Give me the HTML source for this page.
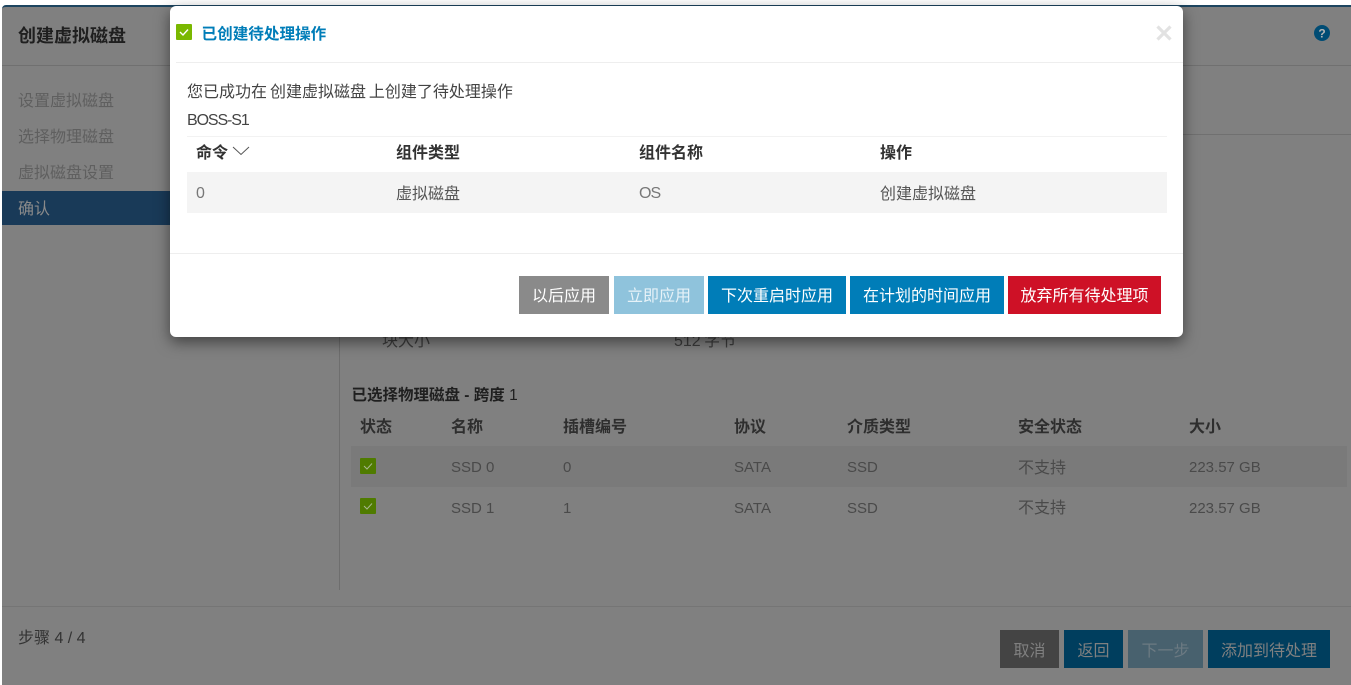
<!DOCTYPE html>
<html lang="zh"><head><meta charset="utf-8"><title>创建虚拟磁盘</title>
<style>
*{box-sizing:border-box}
html,body{margin:0;padding:0}
body{width:1351px;height:685px;position:relative;overflow:hidden;background:#fff;font-family:"Liberation Sans","Noto Sans CJK SC",sans-serif;font-size:16px;color:#4a4a4a;word-spacing:-1px}
.t{position:absolute;white-space:nowrap;line-height:20px}
.l{font-size:15px;color:#4a4a4a;word-spacing:0}
.b{font-weight:700}
.bg{position:absolute;left:2px;top:5px;width:1349px;height:680px;background:#808080;border-top:2px solid #1d4560;border-top-left-radius:4px}
.line{position:absolute;height:1px}
.btn{position:absolute;display:flex;align-items:center;justify-content:center;white-space:nowrap;font-size:16px}
.modal .btn{padding-bottom:2px}
.g{color:#2e2e2e}
.ck{position:absolute;width:16px;height:16px;background:#4f7b00;border-radius:1px}
.ck svg{display:block}
.modal{position:absolute;left:170px;top:6px;width:1013px;height:331px;background:#fff;border-radius:6px;box-shadow:0 5px 15px rgba(0,0,0,.5)}
.m{position:absolute;white-space:nowrap;line-height:20px}
</style></head><body>
<div class="bg"></div>
<div class="t b" style="left:18px;top:26px;font-size:18px;color:#1f1f1f">创建虚拟磁盘</div>
<div class="line" style="left:2px;top:65px;width:1349px;background:#707070"></div>
<div class="t" style="left:18px;top:92px;color:#5f5f5f">设置虚拟磁盘</div>
<div class="t" style="left:18px;top:128px;color:#5f5f5f">选择物理磁盘</div>
<div class="t" style="left:18px;top:164px;color:#5f5f5f">虚拟磁盘设置</div>
<div style="position:absolute;left:2px;top:191px;width:170px;height:34px;background:#193a58"></div>
<div class="t" style="left:18px;top:200px;color:#8a8a8a">确认</div>
<div style="position:absolute;left:339px;top:66px;width:1px;height:524px;background:#6e6e6e"></div>
<div class="line" style="left:1183px;top:134px;width:168px;background:#707070"></div>
<svg style="position:absolute;left:1314px;top:25px" width="16" height="16" viewBox="0 0 16 16"><circle cx="8" cy="8" r="8" fill="#004c74"/><text x="8" y="12.5" font-size="12" font-weight="700" text-anchor="middle" fill="#b5b5b5" font-family="Liberation Sans">?</text></svg>

<div class="t" style="left:382px;top:332px;color:#3c3c3c">块大小</div>
<div class="t" style="left:674px;top:332px;color:#3c3c3c">512 字节</div>
<div class="t b" style="left:351.5px;top:386px;font-size:15.5px;color:#1f1f1f;word-spacing:0">已选择物理磁盘 - 跨度 <span style="font-weight:400">1</span></div>

<div class="t b g" style="left:360px;top:418px">状态</div>
<div class="t b g" style="left:451px;top:418px">名称</div>
<div class="t b g" style="left:563px;top:418px">插槽编号</div>
<div class="t b g" style="left:734px;top:418px">协议</div>
<div class="t b g" style="left:847px;top:418px">介质类型</div>
<div class="t b g" style="left:1018px;top:418px">安全状态</div>
<div class="t b g" style="left:1189px;top:418px">大小</div>
<div style="position:absolute;left:351px;top:446px;width:996px;height:41px;background:#7a7a7a"></div>

<div class="ck" style="left:360px;top:458px"><svg width="16" height="16" viewBox="0 0 16 16"><path d="M4 8l3 3 5-5.5" fill="none" stroke="#a8b890" stroke-width="1"/></svg></div>
<div class="t l" style="left:451px;top:458px">SSD 0</div><div class="t l" style="left:563px;top:458px">0</div><div class="t l" style="left:734px;top:458px">SATA</div><div class="t l" style="left:847px;top:458px">SSD</div><div class="t" style="left:1018px;top:459px">不支持</div><div class="t l" style="left:1189px;top:458px">223.57 GB</div>

<div class="ck" style="left:360px;top:498px"><svg width="16" height="16" viewBox="0 0 16 16"><path d="M4 8l3 3 5-5.5" fill="none" stroke="#a8b890" stroke-width="1"/></svg></div>
<div class="t l" style="left:451px;top:499px">SSD 1</div><div class="t l" style="left:563px;top:499px">1</div><div class="t l" style="left:734px;top:499px">SATA</div><div class="t l" style="left:847px;top:499px">SSD</div><div class="t" style="left:1018px;top:499px">不支持</div><div class="t l" style="left:1189px;top:499px">223.57 GB</div>

<div class="line" style="left:2px;top:606px;width:1349px;background:#757575"></div>
<div class="t" style="left:18px;top:629px;color:#333;word-spacing:0">步骤 4 / 4</div>
<div class="btn" style="left:1000px;top:630px;width:59px;height:38px;background:#444;color:#808080">取消</div>
<div class="btn" style="left:1064px;top:630px;width:59px;height:38px;background:#003e5e;color:#808080">返回</div>
<div class="btn" style="left:1128px;top:630px;width:75px;height:38px;background:#48616e;color:#6c7a82">下一步</div>
<div class="btn" style="left:1208px;top:630px;width:122px;height:38px;background:#003e5e;color:#808080">添加到待处理</div>

<div class="modal">
<div style="position:absolute;left:6px;top:18px;width:16px;height:16px;background:#7ab800;border-radius:1px"><svg width="16" height="16" viewBox="0 0 16 16" style="display:block"><path d="M4 8l3 3 5-5.5" fill="none" stroke="#fff" stroke-width="1.4"/></svg></div>
<div class="m b" style="left:31.5px;top:19px;font-size:15.6px;color:#007db8">已创建待处理操作</div>
<svg style="position:absolute;left:986px;top:19px" width="16" height="16" viewBox="0 0 16 16"><path d="M1.5 1.5l13 13M14.5 1.5l-13 13" stroke="#e2e2e2" stroke-width="3.2" fill="none"/></svg>
<div class="line" style="left:6px;top:56px;width:1007px;background:#eee"></div>
<div class="m" style="left:17px;top:77px;color:#444;word-spacing:-1.5px">您已成功在 创建虚拟磁盘 上创建了待处理操作</div>
<div class="m" style="left:17px;top:105px;color:#444;font-size:16px;letter-spacing:-1.1px">BOSS-S1</div>
<div class="line" style="left:17px;top:130px;width:980px;background:#f2f2f2"></div>
<div class="m b" style="left:26px;top:138px;color:#333">命令</div>
<svg style="position:absolute;left:62px;top:140px" width="18" height="10" viewBox="0 0 18 10"><path d="M1 1l8 7.5L17 1" fill="none" stroke="#555" stroke-width="1"/></svg>
<div class="m b" style="left:226px;top:138px;color:#333">组件类型</div>
<div class="m b" style="left:469px;top:138px;color:#333">组件名称</div>
<div class="m b" style="left:710px;top:138px;color:#333">操作</div>
<div style="position:absolute;left:17px;top:166px;width:980px;height:41px;background:#f4f4f4"></div>
<div class="m" style="left:26px;top:178px;color:#777;font-size:16px">0</div>
<div class="m" style="left:226px;top:179px;color:#555">虚拟磁盘</div>
<div class="m" style="left:469px;top:178px;color:#777;font-size:16px;letter-spacing:-1px">OS</div>
<div class="m" style="left:710px;top:179px;color:#555">创建虚拟磁盘</div>
<div class="line" style="left:0;top:247px;width:1013px;background:#eee"></div>
<div class="btn" style="left:349px;top:270px;width:90px;height:38px;background:#8a8a8a;color:#fff">以后应用</div>
<div class="btn" style="left:444px;top:270px;width:90px;height:38px;background:#8fc3dc;color:#e6f2f8">立即应用</div>
<div class="btn" style="left:538px;top:270px;width:138px;height:38px;background:#007db8;color:#fff">下次重启时应用</div>
<div class="btn" style="left:680px;top:270px;width:154px;height:38px;background:#007db8;color:#fff">在计划的时间应用</div>
<div class="btn" style="left:838px;top:270px;width:153px;height:38px;background:#ce1126;color:#fff">放弃所有待处理项</div>
</div>
</body></html>
